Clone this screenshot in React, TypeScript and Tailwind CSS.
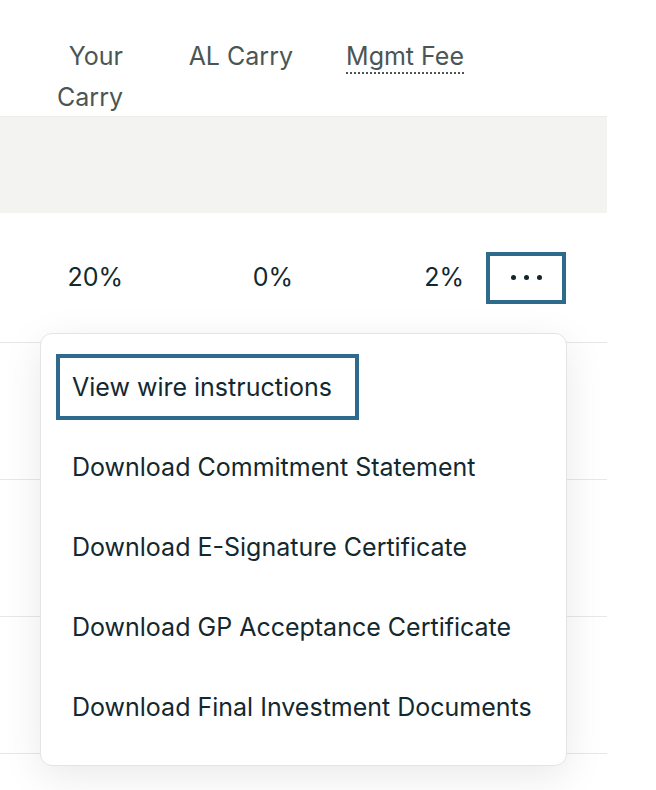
import React from "react";

const menuItems = [
  "View wire instructions",
  "Download Commitment Statement",
  "Download E-Signature Certificate",
  "Download GP Acceptance Certificate",
  "Download Final Investment Documents",
];

const cols = "grid grid-cols-[123px_170px_171px_1fr]";

function MoreButton() {
  return (
    <button className="ml-[22px] flex h-[52px] w-[80px] items-center justify-center gap-[8px] border-4 border-[#2e6a8b] bg-white">
      <span className="h-[5px] w-[5px] rounded-full bg-[#13262d]" />
      <span className="h-[5px] w-[5px] rounded-full bg-[#13262d]" />
      <span className="h-[5px] w-[5px] rounded-full bg-[#13262d]" />
    </button>
  );
}

function ActionsMenu() {
  return (
    <div className="absolute left-[40px] top-[333px] w-[527px] rounded-[12px] border border-[#e4e4e2] bg-white pl-[15px] pt-[20px] pb-[25px] shadow-[0_10px_40px_rgba(0,0,0,0.09)]">
      <div className="flex flex-col items-start gap-[14px]">
        {menuItems.map((label, i) => (
          <button
            key={label}
            className={`h-[66px] border-4 pl-[12px] pr-[23px] text-left text-[25px] leading-[32px] text-[#13282f] ${
              i === 0 ? "border-[#2e6a8b]" : "border-transparent"
            }`}
          >
            {label}
          </button>
        ))}
      </div>
    </div>
  );
}

export default function App() {
  return (
    <div className="min-h-[790px] bg-white font-['Inter','Liberation_Sans',sans-serif]">
      <div className="relative w-[607px]">
        {/* header */}
        <div className={`${cols} h-[116px] pt-[36px] text-[25px] leading-[41px] text-[#4b5654]`}>
          <div className="text-right">
            <span className="inline-block w-[90px]">Your Carry</span>
          </div>
          <div className="text-right">AL Carry</div>
          <div className="text-right">
            <span className="underline decoration-dotted decoration-[1.5px] underline-offset-[7px]">
              Mgmt Fee
            </span>
          </div>
          <div />
        </div>

        {/* group band */}
        <div className="h-[97px] border-t border-[#ececea] bg-[#f3f3f1]" />

        {/* data row */}
        <div className={`${cols} h-[130px] items-center border-b border-[#e7e7e5] text-[25px] text-[#13282f]`}>
          <div className="text-right">20%</div>
          <div className="text-right">0%</div>
          <div className="text-right">2%</div>
          <div className="flex items-center">
            <MoreButton />
          </div>
        </div>

        {/* more rows below the menu */}
        <div className="h-[137px] border-b border-[#e7e7e5]" />
        <div className="h-[137px] border-b border-[#e7e7e5]" />
        <div className="h-[137px] border-b border-[#e7e7e5]" />

        <ActionsMenu />
      </div>
    </div>
  );
}
